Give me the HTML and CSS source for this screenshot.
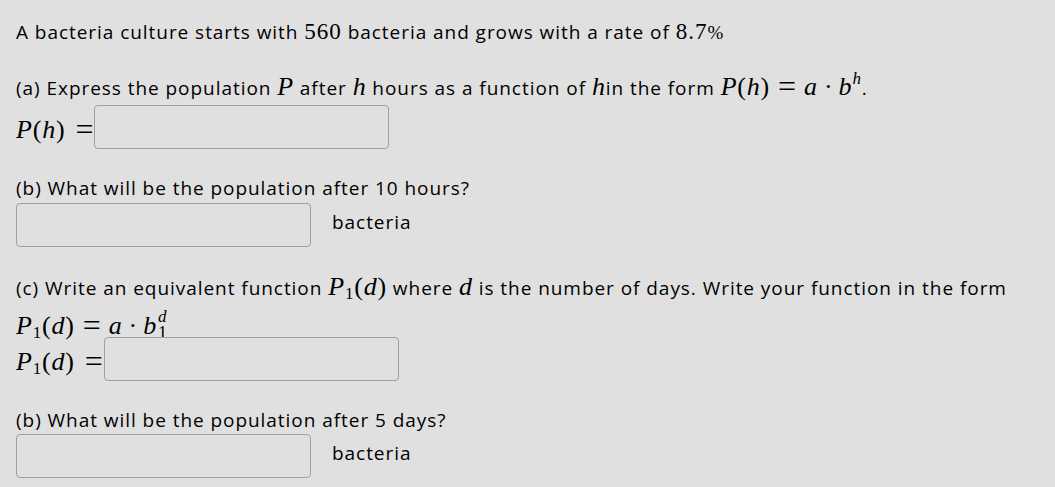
FILE: index.html
```html
<!DOCTYPE html>
<html>
<head>
<meta charset="utf-8">
<link rel="stylesheet" href="styles.css">
</head>
<body>
<div class="page">
  <p class="intro">A bacteria culture starts with <span class="m num">560</span> bacteria and grows with a rate of <span class="m num">8.7</span><span class="m pct">%</span></p>

  <p class="q qa">(a) Express the population <span class="m"><i>P</i></span> after <span class="m"><i>h</i></span> hours as a function of <span class="m"><i>h</i></span>in the form <span class="m"><i>P</i>(<i>h</i>)<span class="op">=</span><i>a</i><span class="dot">·</span><i>b</i><sup><i>h</i></sup></span>.</p>
  <div class="row ra">
    <span class="m lbl"><i>P</i>(<i>h</i>)<span class="op last">=</span></span><span class="box"></span>
  </div>

  <p class="q qb">(b) What will be the population after 10 hours?</p>
  <div class="row rb">
    <span class="box"></span><span class="unit">bacteria</span>
  </div>

  <p class="q qc">(c) Write an equivalent function <span class="m"><i>P</i><sub>1</sub>(<i>d</i>)</span> where <span class="m"><i>d</i></span> is the number of days. Write your function in the form</p>
  <p class="formula"><span class="m"><i>P</i><sub>1</sub>(<i>d</i>)<span class="op">=</span><i>a</i><span class="dot">·</span><i>b</i><span class="ss"><i>d</i><span>1</span></span></span></p>
  <div class="row rc">
    <span class="m lbl"><i>P</i><sub>1</sub>(<i>d</i>)<span class="op last">=</span></span><span class="box"></span>
  </div>

  <p class="q qd">(b) What will be the population after 5 days?</p>
  <div class="row rd">
    <span class="box"></span><span class="unit">bacteria</span>
  </div>
</div>
</body>
</html>
```
FILE: styles.css
```css
html, body {
  margin: 0;
  padding: 0;
  background: #e0e0e0;
}
.page {
  padding: 0 16px;
  font-family: "Open Sans", "DejaVu Sans", sans-serif;
  font-size: 19px;
  letter-spacing: 0.95px;
  color: #000;
}
p {
  margin: 0;
  line-height: 24px;
  height: 24px;
  white-space: nowrap;
}
.m {
  font-family: "Liberation Serif", "DejaVu Serif", serif;
  font-size: 26px;
  line-height: 0;
  letter-spacing: 0.8px;
}
.m.num { font-size: 23px; letter-spacing: 1px; }
.m i { font-style: italic; }
.pct { font-size: 19px; letter-spacing: 0; }
.op {
  display: inline-block;
  font-size: 32px;
  letter-spacing: 0;
  margin: 0 8px;
  transform: translateY(2px);
}
.op.last { margin-left: 10px; margin-right: 1px; }
.dot {
  display: inline-block;
  letter-spacing: 0;
  margin: 0 6px;
}
.m sup {
  font-size: 17px;
  vertical-align: 11px;
  line-height: 0;
}
.m sub {
  font-size: 17px;
  vertical-align: -4px;
  line-height: 0;
}
.ss {
  display: inline-flex;
  flex-direction: column;
  font-size: 17px;
  line-height: 16px;
  vertical-align: 12px;
  margin-left: 1px;
}
.ss span { font-size: 18px; }
.intro { padding-top: 20px; }
.qa { margin-top: 32px; }
.row {
  display: flex;
  align-items: flex-start;
}
.ra { margin-top: 5px; }
.lbl {
  display: block;
  line-height: 24px;
  margin-top: 10px;
}
.box {
  display: block;
  width: 293px;
  height: 42px;
  border: 1px solid #a0a0a0;
  border-radius: 4px;
  background: #e0e0e0;
}
.unit {
  margin-left: 21px;
  margin-top: 7px;
  line-height: 24px;
}
.qb { margin-top: 27px; }
.rb { margin-top: 3px; }
.qc { margin-top: 29px; }
.formula { margin-top: 9px; }
.rc { margin-top: 4px; }
.qd { margin-top: 27px; }
.rd { margin-top: 2px; }
```
